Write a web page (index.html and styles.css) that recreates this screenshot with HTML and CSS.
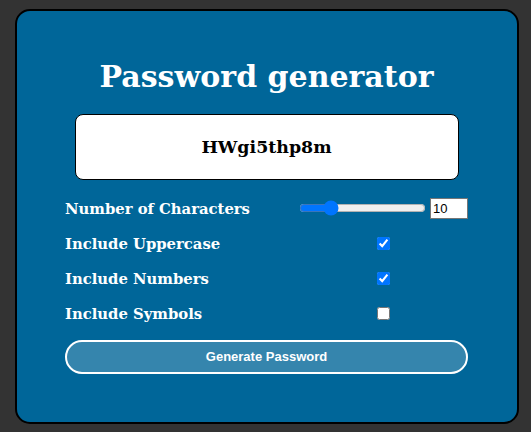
FILE: index.html
```html
<!DOCTYPE html>
<html lang="en">
<head>
<meta charset="utf-8">
<title>Password generator</title>
<link rel="stylesheet" href="styles.css">
</head>
<body>
  <main class="card">
    <h1 class="title">Password generator</h1>
    <div class="output">HWgi5thp8m</div>
    <div class="options">
      <label class="label" for="len">Number of Characters</label>
      <div class="control control-range">
        <input class="range" type="range" id="len" min="4" max="32" value="10">
        <input class="number" type="number" value="10">
      </div>
      <label class="label" for="upper">Include Uppercase</label>
      <div class="control"><input class="check" type="checkbox" id="upper" checked></div>
      <label class="label" for="nums">Include Numbers</label>
      <div class="control"><input class="check" type="checkbox" id="nums" checked></div>
      <label class="label" for="syms">Include Symbols</label>
      <div class="control"><input class="check" type="checkbox" id="syms"></div>
    </div>
    <button class="generate" type="button">Generate Password</button>
  </main>
</body>
</html>
```
FILE: styles.css
```css
html, body {
  margin: 0;
  height: 100%;
}
body {
  box-sizing: border-box;
  padding-left: 2px;
  background: #333333;
  display: flex;
  align-items: center;
  justify-content: center;
  font-family: "DejaVu Serif", Georgia, serif;
}
.card {
  box-sizing: border-box;
  width: 504px;
  height: 415px;
  background: #006699;
  border: 2px solid #000;
  border-radius: 15px;
  display: flex;
  flex-direction: column;
  align-items: center;
  color: #fff;
}
.title {
  margin: 48px 0 19px;
  font-size: 30px;
  line-height: 36px;
  font-weight: bold;
}
.output {
  box-sizing: border-box;
  width: 384px;
  height: 66px;
  background: #fff;
  border: 1px solid #000;
  border-radius: 8px;
  color: #000;
  display: flex;
  align-items: center;
  justify-content: center;
  font-size: 17.4px;
  font-weight: bold;
}
.options {
  width: 403px;
  margin-top: 11px;
  display: grid;
  grid-template-columns: 1fr 170px;
  grid-auto-rows: 35px;
  align-items: center;
}
.label {
  font-size: 14.8px;
  font-weight: bold;
}
.control {
  display: flex;
  justify-content: center;
  align-items: center;
}
.control-range {
  justify-content: flex-start;
  gap: 4px;
}
.range {
  width: 127px;
  margin: 0 0 0 1px;
}
.number {
  box-sizing: border-box;
  width: 38px;
  height: 21px;
  margin: 0;
  padding: 1px 2px;
  border: 1px solid #767676;
  font-family: "Liberation Sans", Arial, sans-serif;
  font-size: 13px;
  color: #000;
  background: #fff;
}
.check {
  width: 13px;
  height: 13px;
  margin: 0;
}
.generate {
  box-sizing: border-box;
  width: 403px;
  height: 34px;
  margin-top: 9px;
  border: 2px solid #fff;
  border-radius: 17px;
  background: #3585ad;
  color: #fff;
  font-family: "Liberation Sans", Arial, sans-serif;
  font-size: 13px;
  font-weight: bold;
}
```
